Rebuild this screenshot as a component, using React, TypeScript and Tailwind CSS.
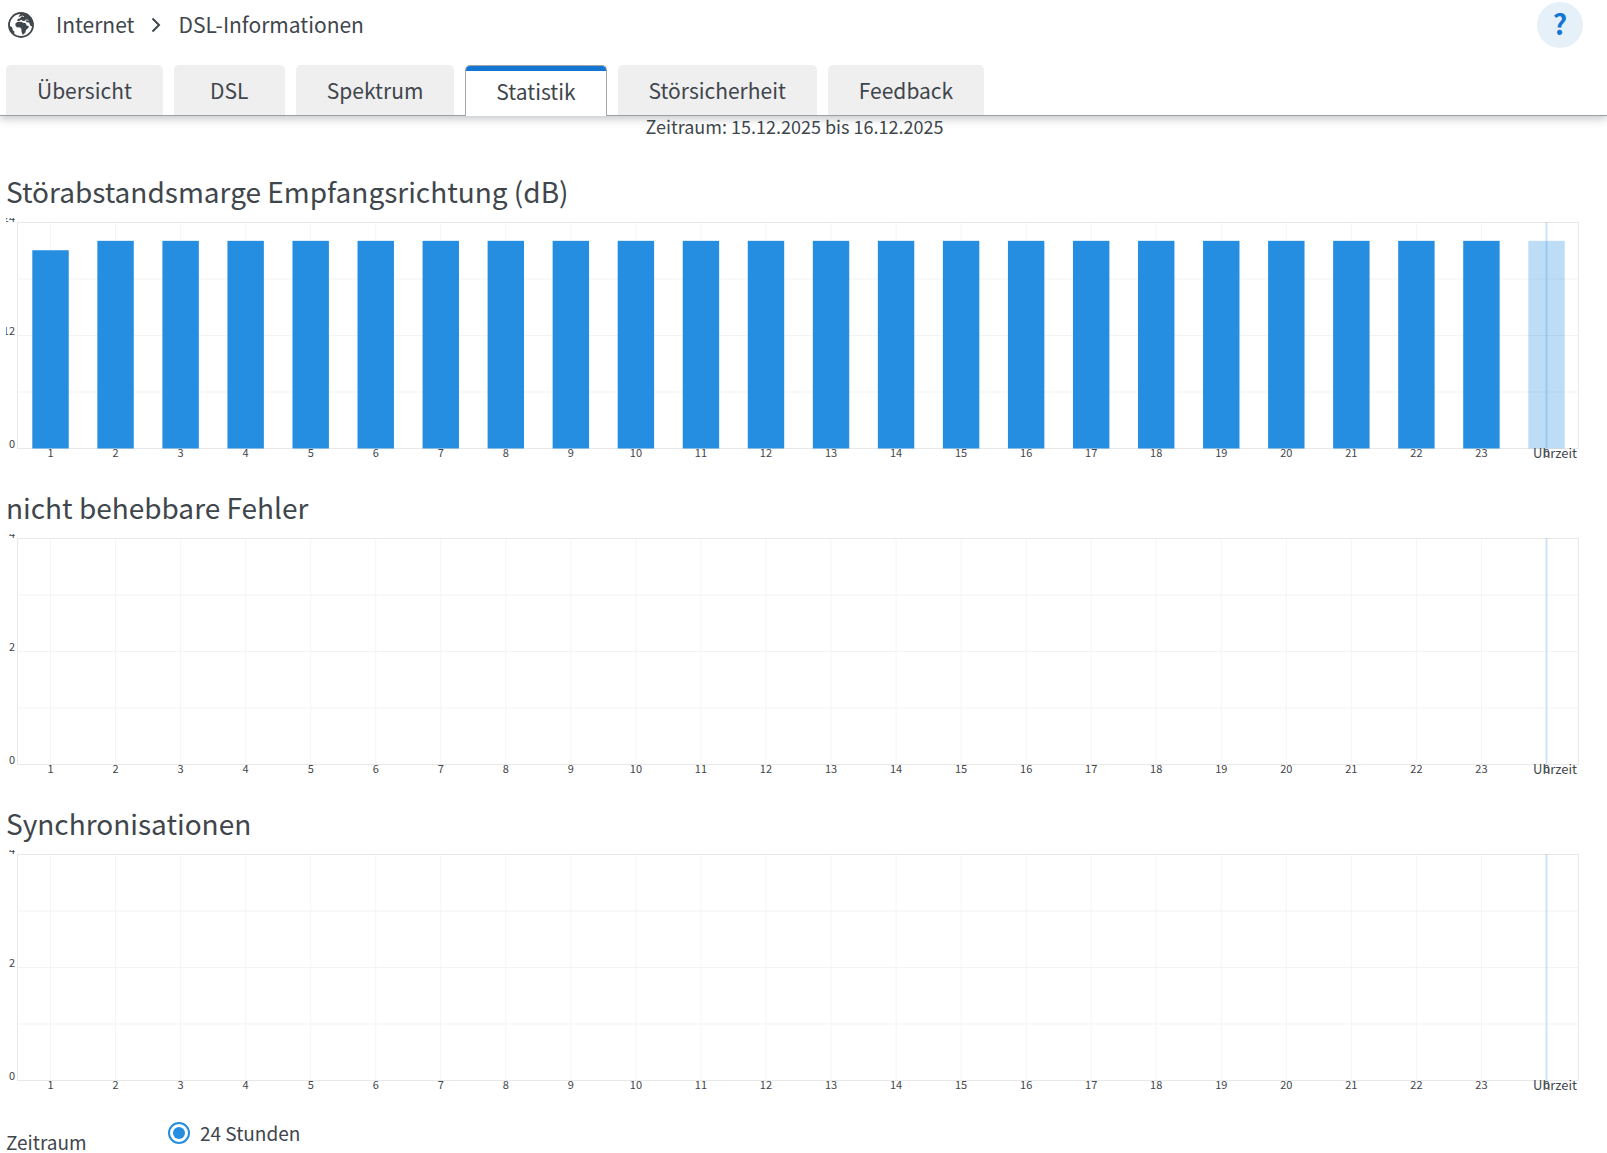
import React from "react";

type Chart = {
  title: string;
  max: number;
  values: number[];
};

const tabs: string[] = ["Übersicht", "DSL", "Spektrum", "Statistik", "Störsicherheit", "Feedback"];

const hours: number[] = [...Array.from({ length: 23 }, (_, i) => i + 1), 0];

const charts: Chart[] = [
  {
    title: "Störabstandsmarge Empfangsrichtung (dB)",
    max: 24,
    values: hours.map((h) => (h === 1 ? 21 : 22)),
  },
  { title: "nicht behebbare Fehler", max: 4, values: [] },
  { title: "Synchronisationen", max: 4, values: [] },
];

const PLOT_HEIGHT = 226;
const SLOT = 100 / 24;

const Globe: React.FC = () => (
  <svg viewBox="0 0 26 26" className="size-[26px] text-[#3f464c]" aria-hidden>
    <circle cx="13" cy="13" r="12" fill="none" stroke="currentColor" strokeWidth="1.8" />
    <path
      fill="currentColor"
      d="M7.4 11.4l2-1.4 4.2-.2 1.2 1 2.6.2 1.4 2.8 2.2.2-.8 2-2.2 2-.6 2.4-1.4 1.6-1.4.8-1-2.8-.2-3-1.2-1.6-3.4-.2-1.4-1.8z"
    />
    <path
      fill="currentColor"
      d="M9 8.6l1-1.8 2-.4.8-1.4-2.4-.4L13 1.6l5.4-.2 5.2 4.4 1.6 5.4-1.4 3.2-1.6-1-1-2.8-2.6-.4-1-1.4-2.6.2-1.8-1.2-2.4 1.4z"
    />
    <path fill="currentColor" d="M1 10.6l.8 3.4 2.2 1 1 3.4 1.4 1.2-.2 2.6L2.6 19 .6 13z" />
    <path d="M12 4.8l2.8-.8 1.2.8M17 8.4l2.4-.6 1 1.2" fill="none" stroke="#fff" strokeWidth="0.8" />
  </svg>
);

const BarChart: React.FC<{ chart: Chart }> = ({ chart }) => (
  <section>
    <h2 className="h-[42px] text-[28px] leading-[30px]">{chart.title}</h2>
    <div className="h-[270px] overflow-hidden pt-1 pr-1 pl-3">
      <svg
        className="block h-[226px] w-full overflow-visible text-[11px]"
        role="img"
        aria-label={chart.title}
        fill="#3f464c"
      >
        {hours.map((h, i) => (
          <line
            key={h}
            x1={`${(i + 0.5) * SLOT}%`}
            x2={`${(i + 0.5) * SLOT}%`}
            y1="0"
            y2={PLOT_HEIGHT}
            stroke="#f5f5f5"
          />
        ))}
        {[57, 113.5, 170].map((y) => (
          <line key={y} x1="0" x2="100%" y1={y} y2={y} stroke="#f3f3f3" />
        ))}
        <rect x="-0.5" y="0.5" width="100%" height={PLOT_HEIGHT} fill="none" stroke="#e8e8e8" />

        {chart.values.map((v, i) => {
          const height = (v / chart.max) * PLOT_HEIGHT;
          return (
            <rect
              key={i}
              x={`${(i + 0.22) * SLOT}%`}
              y={PLOT_HEIGHT - height}
              width={`${0.56 * SLOT}%`}
              height={height + 0.5}
              fill="#268ee0"
              fillOpacity={hours[i] === 0 ? 0.3 : 1}
            />
          );
        })}
        <line
          x1={`${23.5 * SLOT}%`}
          x2={`${23.5 * SLOT}%`}
          y1="0"
          y2={PLOT_HEIGHT}
          stroke="#268ee0"
          strokeOpacity="0.2"
          strokeWidth="2"
        />

        {[chart.max, chart.max / 2, 0].map((v, i) => (
          <text key={v} x="-3" y={i * 113} textAnchor="end">
            {v}
          </text>
        ))}
        {hours.map((h, i) => (
          <text key={h} x={`${(i + 0.5) * SLOT}%`} y="235" textAnchor="middle">
            {h}
          </text>
        ))}
        <text x="100%" y="236" dx="-2" textAnchor="end" className="text-[13px]">
          Uhrzeit
        </text>
      </svg>
    </div>
  </section>
);

const App: React.FC = () => {
  return (
    <div className="flex h-screen flex-col overflow-hidden bg-white font-['Noto_Sans_CJK_SC','Noto_Sans',sans-serif] text-[#3f464c]">
      <header className="relative z-10 shrink-0 border-b border-[#9c9fa3] shadow-[0_3px_8px_#3f464c4d]">
        <div className="flex h-[65px] items-start justify-between pt-[2px] pr-6 pl-2">
          <nav className="flex h-[46px] items-center text-[21px]" aria-label="Breadcrumb">
            <Globe />
            <a href="#internet" className="ml-[22px]">
              Internet
            </a>
            <svg viewBox="0 0 10 16" className="mx-[17px] h-4 w-[10px]" aria-hidden>
              <path d="M1.5 1.5L8 8l-6.5 6.5" fill="none" stroke="#3f464c" strokeWidth="2" />
            </svg>
            <a href="#dsl">DSL-Informationen</a>
          </nav>
          <button
            type="button"
            aria-label="Hilfe"
            className="flex size-[46px] justify-center rounded-full bg-[#e5f0f9] text-[28px] leading-[42px] font-bold text-[#1376d2]"
          >
            ?
          </button>
        </div>
        <div className="-mb-px flex items-end gap-[11px] pl-[6px] text-[21px]" role="tablist">
          {tabs.map((tab) =>
            tab === "Statistik" ? (
              <button
                key={tab}
                type="button"
                role="tab"
                aria-selected
                className="h-[51px] overflow-hidden rounded-t-[5px] border border-b-0 border-[#a3a6aa] bg-white"
              >
                <span className="block h-[50px] border-t-[5px] border-[#1376d2] px-[30px] leading-[40px]">{tab}</span>
              </button>
            ) : (
              <button
                key={tab}
                type="button"
                role="tab"
                aria-selected={false}
                className="mb-px h-[50px] min-w-[111px] rounded-t-[5px] bg-[#efefef] px-[31px] leading-[50px]"
              >
                {tab}
              </button>
            ),
          )}
        </div>
      </header>

      <main className="min-h-0 flex-1 overflow-hidden pr-6 pl-[6px]">
        <p className="h-[60px] text-center text-[18px] leading-5">Zeitraum: 15.12.2025 bis 16.12.2025</p>
        <div className="flex flex-col gap-1">
          {charts.map((c) => (
            <BarChart key={c.title} chart={c} />
          ))}
        </div>
        <fieldset className="flex text-[19px] leading-[26px]">
          <div className="w-[162px] pt-[9px]">Zeitraum</div>
          <label className="flex h-[26px] items-center gap-[10px]">
            <input
              type="radio"
              name="range"
              defaultChecked
              className="size-[22px] appearance-none rounded-full border-2 border-[#268ee0] p-[3px] checked:bg-[#268ee0] checked:bg-clip-content"
            />
            24 Stunden
          </label>
        </fieldset>
      </main>
    </div>
  );
};

export default App;
